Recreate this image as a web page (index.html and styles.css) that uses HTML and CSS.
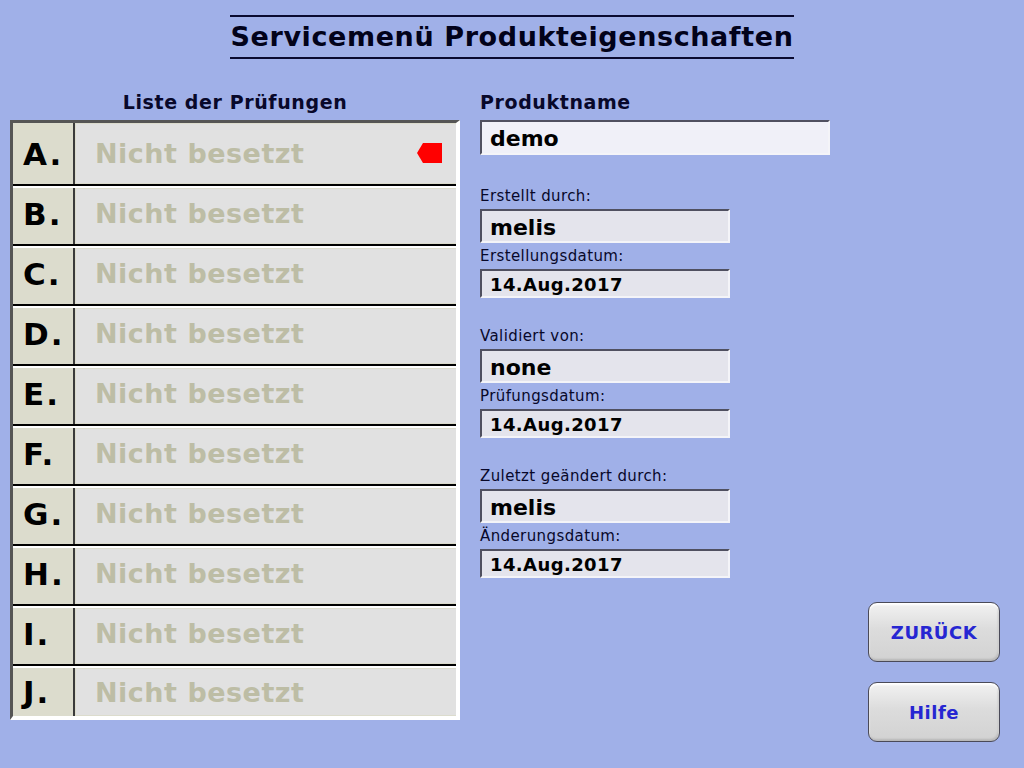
FILE: index.html
```html
<!DOCTYPE html>
<html>
<head>
  <title>Servicemenü Produkteigenschaften</title>
  <link rel="stylesheet" href="styles.css">
</head>
<body>
  <div class="title-bar">
    <h1>Servicemenü Produkteigenschaften</h1>
  </div>
  <div class="main">
    <div class="checks">
      <h2>Liste der Prüfungen</h2>
      <div class="check-list">
        <div class="check-row">
          <span class="check-letter">A.</span>
          <span class="check-name">Nicht besetzt</span>
          <svg class="marker" width="25" height="20" viewBox="0 0 25 20"><polygon points="0,10 6,0 25,0 25,20 6,20" fill="#ff0000"/></svg>
        </div>
        <div class="check-row"><span class="check-letter">B.</span><span class="check-name">Nicht besetzt</span></div>
        <div class="check-row"><span class="check-letter">C.</span><span class="check-name">Nicht besetzt</span></div>
        <div class="check-row"><span class="check-letter">D.</span><span class="check-name">Nicht besetzt</span></div>
        <div class="check-row"><span class="check-letter">E.</span><span class="check-name">Nicht besetzt</span></div>
        <div class="check-row"><span class="check-letter">F.</span><span class="check-name">Nicht besetzt</span></div>
        <div class="check-row"><span class="check-letter">G.</span><span class="check-name">Nicht besetzt</span></div>
        <div class="check-row"><span class="check-letter">H.</span><span class="check-name">Nicht besetzt</span></div>
        <div class="check-row"><span class="check-letter">I.</span><span class="check-name">Nicht besetzt</span></div>
        <div class="check-row"><span class="check-letter">J.</span><span class="check-name">Nicht besetzt</span></div>
      </div>
    </div>

    <div class="product">
      <h2>Produktname</h2>
      <div class="field field-name">demo</div>

      <div class="group">
        <label>Erstellt durch:</label>
        <div class="field">melis</div>
        <label>Erstellungsdatum:</label>
        <div class="field field-date">14.Aug.2017</div>
      </div>

      <div class="group">
        <label>Validiert von:</label>
        <div class="field">none</div>
        <label>Prüfungsdatum:</label>
        <div class="field field-date">14.Aug.2017</div>
      </div>

      <div class="group">
        <label>Zuletzt geändert durch:</label>
        <div class="field">melis</div>
        <label>Änderungsdatum:</label>
        <div class="field field-date">14.Aug.2017</div>
      </div>
    </div>

    <div class="actions">
      <button id="backButton">ZURÜCK</button>
      <button id="helpButton">Hilfe</button>
    </div>
  </div>
</body>
</html>
```

FILE: styles.css
```css
body {
  margin: 0;
  font-family: "DejaVu Sans", sans-serif;
  background-color: #a0b0e8;
  color: #08082a;
}

.title-bar {
  text-align: center;
  padding-top: 15px;
}

.title-bar h1 {
  display: inline-block;
  margin: 0;
  padding: 0 1px;
  font-size: 27px;
  letter-spacing: 0.6px;
  line-height: 40px;
  color: #02021a;
  border-top: 2px solid #0a0a30;
  border-bottom: 2px solid #0a0a30;
}

.main {
  display: flex;
  margin-top: 30px;
  padding-left: 10px;
}

h2 {
  margin: 2px 0 7px 0;
  font-size: 19px;
  letter-spacing: 0.6px;
  line-height: 22px;
}

/* left: list of checks */
.checks {
  width: 450px;
}

.checks h2 {
  text-align: center;
}

.check-list {
  border-style: solid;
  border-width: 3px 4px 4px 3px;
  border-color: #555 #fff #fff #555;
}

.check-row {
  position: relative;
  display: flex;
  height: 60px;
  box-sizing: border-box;
  border-top: 2px solid #fff;
  border-bottom: 2px solid #000;
  background-color: #dcdccd;
}

.check-row:first-child {
  height: 63px;
  border-top: none;
}

.check-row:last-child {
  height: 50px;
  border-bottom: none;
}

.check-letter {
  width: 62px;
  flex-shrink: 0;
  display: flex;
  align-items: center;
  box-sizing: border-box;
  padding-left: 10px;
  border-right: 2px solid #3a3a3a;
  font-size: 31px;
  letter-spacing: 2px;
  font-weight: bold;
  color: #000;
}

.check-name {
  flex: 1;
  display: flex;
  align-items: center;
  box-sizing: border-box;
  margin: 1px 0 1px 1px;
  padding-left: 19px;
  background-color: #e1e1e1;
  font-size: 27px;
  letter-spacing: 0.5px;
  font-weight: bold;
  color: #bdbda5;
}

.check-row + .check-row .check-letter,
.check-row + .check-row .check-name {
  padding-bottom: 5px;
}

.check-row:last-child .check-letter,
.check-row:last-child .check-name {
  padding-bottom: 0;
}

.marker {
  position: absolute;
  top: 20px;
  right: 14px;
}

/* middle: product data */
.product {
  width: 350px;
  margin-left: 20px;
}

.product label {
  display: block;
  font-size: 15px;
  letter-spacing: 0.4px;
  line-height: 16px;
  margin-bottom: 5px;
}

.field + label {
  margin-top: 5px;
}

.group {
  margin-top: 30px;
}

.field-name + .group {
  margin-top: 33px;
}

.field {
  width: 250px;
  height: 34px;
  box-sizing: border-box;
  padding: 3px 0 0 8px;
  border-style: solid;
  border-width: 2px;
  border-color: #505060 #f4f4f8 #f4f4f8 #505060;
  background-color: #e4e4ec;
  font-size: 22px;
  font-weight: bold;
  line-height: 27px;
  color: #000;
}

.field-name {
  width: 350px;
  height: 35px;
  padding-top: 2px;
  line-height: 29px;
  background-color: #f0f0f8;
}

.field-date {
  height: 29px;
  padding-top: 2px;
  font-size: 18px;
  letter-spacing: 0.4px;
  line-height: 23px;
}

/* right: buttons */
.actions {
  display: flex;
  flex-direction: column;
  gap: 20px;
  margin-left: 38px;
  padding-top: 513px;
}

.actions button {
  width: 132px;
  height: 60px;
  border: 1px solid #4a4a58;
  border-radius: 9px;
  background: linear-gradient(#f2f2f2, #dcdcdc 45%, #d2d2d2);
  box-shadow: inset 0 2px 2px #fff, inset -1px -2px 2px #b8b8b8;
  font-family: "DejaVu Sans", sans-serif;
  font-size: 18px;
  letter-spacing: 0.5px;
  font-weight: bold;
  color: #2626d2;
  cursor: pointer;
}
```
